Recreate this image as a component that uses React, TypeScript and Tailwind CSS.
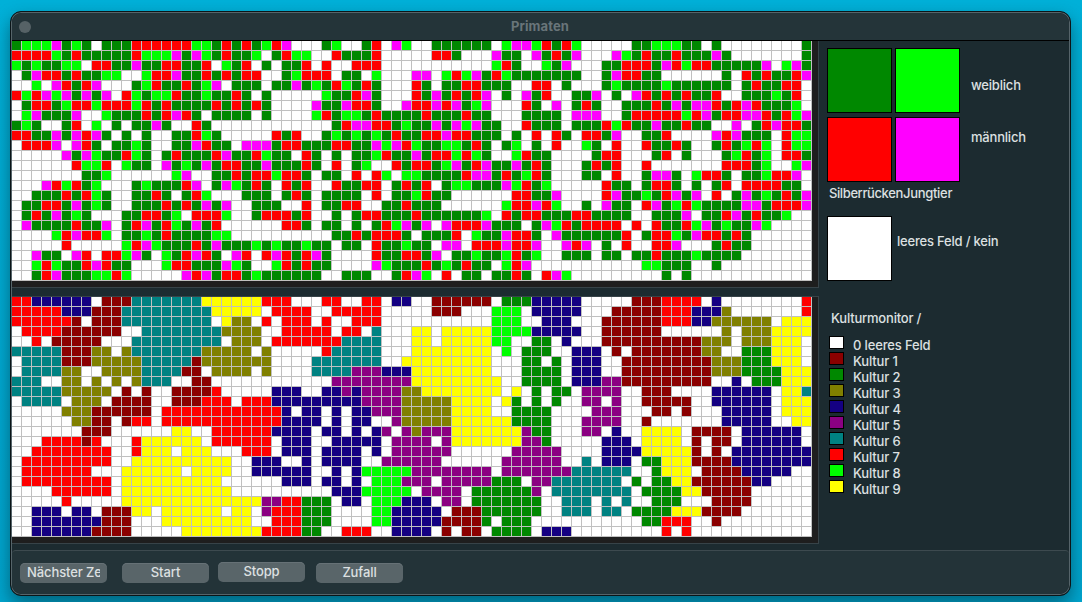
import React from "react";

const individuals = [
  "glllmglg.gggrrrrrrll" + "grgrglrm...gl..gr.ml" + "..gggggg.lmmlrgrl..." + "..gglllgg.g........g",
  "rrrrlgrgggggrlllmgml" + "grggl.grll..rgggr..." + "..rrg...mgg.mgrgm..." + "mlgrggrgggmg.......g",
  "lglggll.rrggmggrrggr" + ".lgr.g.ggr.r..rrr..." + "........lrg..lgm...g" + "grrrgmrlrrgggggm.lmg",
  ".gmrrgrggll..lrrmggr" + "grgrr..glrrr.gg.l..." + "mm.lrlmgrlggggggg..g" + "mrrgg......g.rgrggrm",
  "..l.mrgrm...glrggrgl" + "m.ggg.ggmglgrlgrg..." + "rg.ggrrggg..rr.g...g" + "lgggglgggggg.grggrr.",
  "rlrmlmgmgm.rlgllrggl" + "ggrg.g.....lggrmg..." + "rgmgrgrm.g.mgr..ggm." + "g.mrgrgrggr..ggglgr.",
  ".grrglrrlrrrlrgrgggg" + "rgrgrg....mggmrrg..m" + "rrmrmglm...rg.m.grg." + ".gggrgmgmmrgrmrgggl.",
  ".lmgggm..lgggrgrmrg." + "gggg.g....lrgllgrggg" + "grgggrgg...gggg.mmm." + ".grrrrrlrmgrrmmrgrlm",
  "glg..gr.l.g.ggmg..rg" + "............grmmrrgl" + "ggmgmlmgg..rggg.gggr" + "lrggmggrgg..m.grmrrg",
  "rrggmgmrmg.g.g..ggrl" + "g.....rgr..glglglgrg" + "grrmrrggg.g.r.rg.rrg" + "m..ggr....mrmggg.rll",
  ".rrrm.mrg.gglg..ggmr" + "gg.mmmgrrgggrrggmlmr" + "lggllgrg.gl.g.r..lg." + "r..rggrg..grglrl.rll",
  ".....mgmlggrlg.grggg" + "rmggrlgg.rg.g.gglrgg" + "mgrrlrlg..lrgg....gr" + "r...gr.g...glrgl.rrg",
  "......rllr.lgg.mglgm" + "grrggmgggrg.r.gl..rg" + "rrglmgrmggmgrg...grg" + "r..r.......rrrgl..lm",
  ".......ggl......lm.." + "ggrgrrlrrg.gg.r.rl.l" + "lggggrmmgrglrg...gg." + "r..gmmg.lrrg.gglrrm.",
  "...mrlrgl...glgggrm." + "gmlgrg.rgr..rggrr.gr" + "gr.gllgggmlrgl.....r" + "gg.grrg.g.gr.rrrrgg.",
  "..gggrgrlg..ggrg.grl" + "...ggg.grg.gggg.r.gg" + "lrgg......rrggm....r" + "mgglgrmgm.r.gmglgrgm",
  ".ggrrgmglg..gggrgrgm" + "gm..ggg..r.ggrr..ggr" + "ggg......lrrmrl..g.m" + "gg.rmglrlggggmmgrrrm",
  ".grgmglg...ggrrgl.rr" + "rl..grrrgr..g.grrggg" + "rggggggl.rgrrgggrrgg" + "gg..gggm.ggrmgrggl..",
  ".mggggrggm.grmgrlgmg" + "r......rrg.gg.g.grlm" + "gm.mrrrmggg.gmlrgrrr" + "r.r.rggrlmglggml....",
  "....lrmrrl.gglgrgggg" + "ll..........ggrgrrrg" + ".gggr.lggmrrg.mggggg" + "gr.grrlgmrrgrg......",
  ".....r.....lrmlgggrg" + "mggglglgglgg.gg.rggl" + "gg.mm.rrrmrrm..mrm.g" + ".r..rrm...grgg......",
  "..mgg.mr.rrlmg.lgrmr" + "g.mr.rmrgrmg....rggr" + "rgm.gglgglrgl..ggg.g" + "g.ggrggglgggg.......",
  "..lrlggrmrgg...lrrgg" + "gmlg..lrgrgg....mlgg" + "grglgrgg.lrm........" + "...llggg..g.........",
  "..grmgggllrl.....mrm" + "grrglgggggg..ggg..gr" + "ml.r.gg.ggrg.rml...." + ".....g.g............",
];

// Run-length encoded rows: a count followed by the culture's letter.
const cultures = [
  "2r6n1w3d7t6y3r3w2r2w2r1w2n" + "2w6d1w3g5n5w3d4r1w1n8w1r",
  "5r3n3d9t5y1w4r2w5r3w" + "2w3d3w3l1w5n3w5d3r3n1o7w1r",
  "6r1d1w3d9t1w1y2o1w1r1w3r1w1r2w3r3w" + "8w3l2w3n3w6d3r2n6o1w3y",
  "1w4r6d2w8t4o2w5r1w2r1w1t3w" + "2y1w5y4l5n2w6d6w1o1w3o4y",
  "2w1r1w5d3w9t1w3o1w7r4t3w" + "2y1w5y2l2w2g1w1n3w10d3o1w3o3y1w",
  "5t3d2o1w1o7t5o1w1o5w1r5t3w" + "8y1w1l1w3g2w3n1w1d1w7d2o2w3g3y1w",
  "1w4t3d5o5t1d7o4w7t2w1y" + "8y3w2g1w1g1w3n2w9d3o3g3y1w",
  "1w4t2o2w4o4t2d1w4o1w1o4w4t3p3n" + "8y3w4g1w3n2w9d3o4g3y",
  "3t2w2o1w1o1w1o1w1o3t2w2d12w8p" + "9y2w4g1w3n2p9d2w1n1w3g3y",
  "5t5o1w1d1w1d2w4d1r5w3n2w2n1p1n4p1o" + "1o8y1w1y1w1g1w2g1w4p2w3d4w6n1w2y1t",
  "1w4t1w3o1w4d2w3d3r1w3r9n4p1o" + "4o4y1w1y1g1w1g1w1g2w2p1w1p2w5d2w6n1w3y",
  "5w3o6d1w12r1n1w2n1w1n1w2n3p1o" + "4o4y2w4g4w3p3w2d1w1d3w5n1w3y",
  "6w2o2d1w1d2r1w12r4n1w1n1w2n2w1p1o" + "4o6y4g3w4p2w1d7w5n2w2y",
  "7w3d6w2y2w6r4n1w2n1w1n1w1n1p1w1p" + "1o3p7y1p2g3w2p1w1n2w4y1w4d1w6n1w",
  "3w4r1d1r3w1r6y1w6r1w3n2w5n1w2p" + "2p1w1p7y2p1g5w3n1w4y1w1d1w2d1w6n1w",
  "2w8r2w1r3y1w3y3w3r1w3n1w4n1w1n1w2p" + "4p6w5p4w4n5y1d1w1d1w8n",
  "1w9r2w10y2w3n2w1n1w4n2w3p" + "3p6w6p2w1t1w3n1w2g3y4d8n",
  "1w7r3w6y1w4y2w6n2w1n1w1n5l" + "8p1w7p6t2w1g3y1w4d5n2w",
  "1w9r1w10y6w3n1w2n1w1n1w3l1p" + "2p1w5p3g1w2p7t1w1g1w2g2y6d2n4w",
  "4w6r1w11y10w3n5l" + "1w4p1w6g1p1w8t1w4g2y5d6w",
  "5w1r5w14y2p2r3g1w2n1w3l1n" + "2n1w2p1w7g2w3t1w1t1w1t2w3g3w4d6w",
  "2w3n1w2n1w3d2y1w6y1w2y1w1p3r3g4w2l2n" + "3n1w3d6g2w3t1w2t1w4g3y4d7w",
  "2w7n3d3w9y2w3r3g4w2l2n" + "3n4d1g1w3g11w2g3r2w1d9w",
  "2w6n4d5w8y4r2g2w3r2w2n" + "2n1w1d1w2d1w4g1w3n9w1r1w1r12w",
].map((row) => row.replace(/(\d+)([a-z])/g, (_, n: string, c: string) => c.repeat(Number(n))));

const colors: Record<string, string> = {
  ".": "bg-white",
  w: "bg-white",
  d: "bg-[#8b0000]",
  g: "bg-[#008800]",
  o: "bg-[#808000]",
  n: "bg-[#140082]",
  p: "bg-[#8b0082]",
  t: "bg-[#008282]",
  r: "bg-[#ff0000]",
  l: "bg-[#00ff00]",
  y: "bg-[#ffff00]",
  m: "bg-[#ff00ff]",
};

const legend = [
  ["w", "0 leeres Feld"],
  ["d", "Kultur 1"],
  ["g", "Kultur 2"],
  ["o", "Kultur 3"],
  ["n", "Kultur 4"],
  ["p", "Kultur 5"],
  ["t", "Kultur 6"],
  ["r", "Kultur 7"],
  ["l", "Kultur 8"],
  ["y", "Kultur 9"],
];

function Board({ rows }: { rows: string[] }) {
  return (
    <div className="h-[247px] w-[807px] border-r border-b border-[#374348] bg-[#1e1e1e]">
      <div className="grid h-[240px] w-[800px] grid-cols-[repeat(80,10px)] grid-rows-[repeat(24,10px)] bg-[#c0c0c0]">
        {rows.flatMap((row, y) =>
          [...row].map((c, x) => <div key={`${x}-${y}`} className={`size-[9px] ${colors[c]}`} />)
        )}
      </div>
    </div>
  );
}

function Swatch({ color }: { color: string }) {
  return <div className={`size-[65px] border border-black ${colors[color]}`} />;
}

function PushButton({ label, className = "" }: { label: string; className?: string }) {
  return (
    <button
      className={`h-5 w-[87px] rounded-[5px] bg-[#596569] px-[7px] pb-[2px] text-[13px] leading-[18px] tracking-[-0.1px] shadow-[inset_0_1px_0_#667176] ${className}`}
    >
      <span className="block overflow-hidden whitespace-nowrap">{label}</span>
    </button>
  );
}

export default function App() {
  return (
    <div className="h-[602px] w-[1082px] overflow-hidden bg-linear-to-b from-[#00b0d8] to-[#00a5ce] pt-[11px] pl-[10px] font-['Inter','Liberation_Sans',sans-serif] text-[13px] leading-4 font-medium text-[#dde0e1]">
      <div className="flex h-[585px] w-[1061px] flex-col overflow-hidden rounded-[11px] border border-[#0b1518] bg-[#1c2b30] shadow-[0_8px_18px_rgba(0,0,0,0.4),inset_0_0_0_1px_#56646a]">
        <header className="mx-px mt-px flex h-[28px] shrink-0 items-center rounded-t-[10px] border-b border-black bg-[#243439] pl-[7px]">
          <div className="size-3 rounded-full bg-[#566266]" />
          <h1 className="flex-1 pr-[20px] pb-[2px] text-center text-[13px] font-bold tracking-[0.1px] text-[#697579]">Primaten</h1>
        </header>
        <main className="flex h-[509px] shrink-0 pl-px">
          <div className="flex w-[807px] shrink-0 flex-col">
            <Board rows={individuals} />
            <div className="mt-2 border-t border-[#374348]">
              <Board rows={cultures} />
            </div>
          </div>
          <aside className="pl-2 tracking-[-0.2px] whitespace-nowrap">
            <div className="flex pt-[7px]">
              <div className="grid grid-cols-[65px_65px] gap-x-[3px] gap-y-[4px]">
                <Swatch color="g" />
                <Swatch color="l" />
                <Swatch color="r" />
                <Swatch color="m" />
              </div>
              <div className="pt-[29px] pl-[11px]">
                <p>weiblich</p>
                <p className="mt-9">männlich</p>
              </div>
            </div>
            <div className="mt-[3px] flex pl-[2px] tracking-[-0.4px]">
              <span className="w-[74px]">Silberrücken</span>
              <span className="tracking-[-0.3px]">Jungtier</span>
            </div>
            <div className="mt-[15px] flex">
              <Swatch color="w" />
              <p className="mt-[17px] ml-[5px]">leeres Feld / kein</p>
            </div>
            <p className="mt-[29px] pl-1">Kulturmonitor /</p>
            <ul className="mt-[10px] pl-[2px] tracking-[-0.15px]">
              {legend.map(([c, label]) => (
                <li key={label} className="flex h-4">
                  <span className={`h-[13px] w-[15px] border border-black ${colors[c]}`} />
                  <span className="mt-px ml-[9px] leading-4">{label}</span>
                </li>
              ))}
            </ul>
          </aside>
        </main>
        <footer className="mx-px mb-px flex flex-1 items-start rounded-t-[4px] rounded-b-[10px] border-t border-[#3d4a4f] bg-[#233338] pt-3 pl-2">
          <PushButton label="Nächster Ze" className="text-left" />
          <PushButton label="Start" className="ml-[15px]" />
          <PushButton label="Stopp" className="-mt-px ml-[9px]" />
          <PushButton label="Zufall" className="ml-[11px]" />
        </footer>
      </div>
    </div>
  );
}
